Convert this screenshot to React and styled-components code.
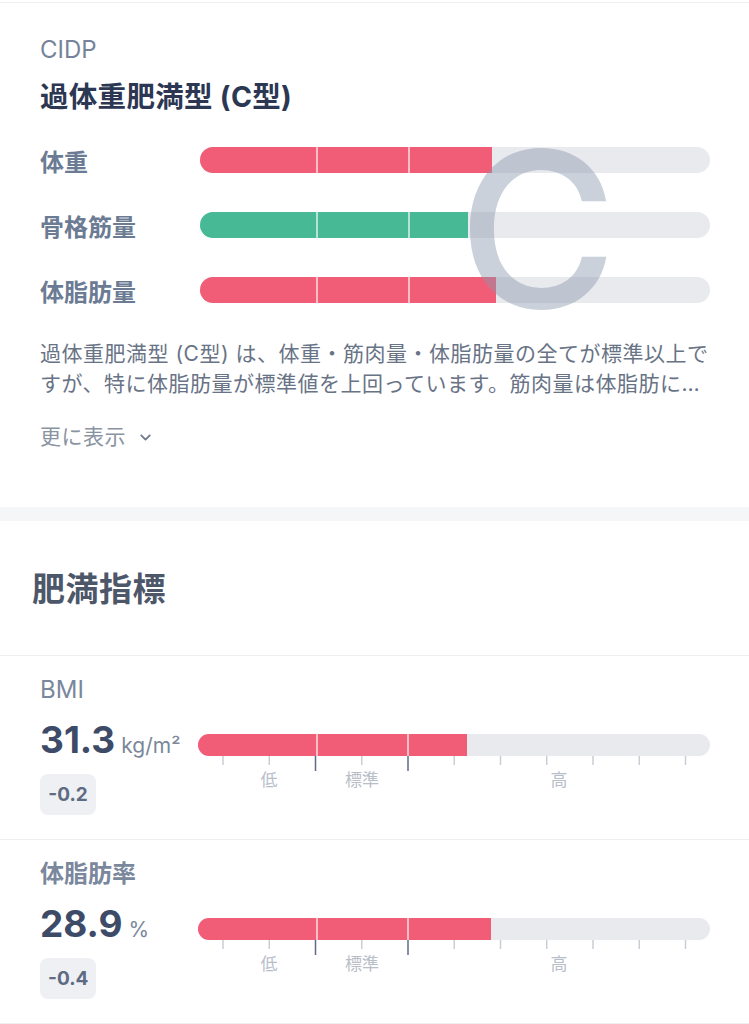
import React from "react";
import styled, { createGlobalStyle } from "styled-components";
import { ChevronDown } from "lucide-react";

const GlobalStyle = createGlobalStyle`
  html, body {
    margin: 0;
    padding: 0;
    background: #ffffff;
  }
  body {
    font-family: "Inter", "Noto Sans CJK JP", sans-serif;
    -webkit-font-smoothing: antialiased;
  }
`;

const RED = "#f15c77";
const GREEN = "#47b994";
const TRACK = "#e8eaee";

const Page = styled.div`
  width: 749px;
  padding-top: 2px;
  background: #ffffff;
`;

const TypeCard = styled.section`
  border-top: 1px solid #eef0f3;
  padding: 32px 40px 55px 40px;
  display: flex;
  flex-direction: column;
`;

const Eyebrow = styled.div`
  font-size: 24px;
  line-height: 30px;
  color: #76839a;
`;

const TypeTitle = styled.h2`
  margin: 13px 0 0 0;
  font-size: 28.5px;
  line-height: 38px;
  font-weight: 700;
  letter-spacing: 0.3px;
  color: #2c3853;
`;

const BarsArea = styled.div`
  position: relative;
  margin-top: 24px;
  display: flex;
  flex-direction: column;
  gap: 25px;
`;

const BarRow = styled.div`
  height: 40px;
  display: grid;
  grid-template-columns: 160px 510px;
  align-items: center;
`;

const RowLabel = styled.div`
  font-size: 24px;
  font-weight: 700;
  color: #6c7b94;
`;

const Track = styled.div`
  position: relative;
  height: ${(p) => p.$h}px;
  border-radius: ${(p) => p.$h / 2}px;
  background: ${TRACK};
  overflow: hidden;
`;

const Fill = styled.div`
  position: relative;
  height: 100%;
  background: ${(p) => p.$color};
  overflow: hidden;
`;

const Divider = styled.span`
  position: absolute;
  top: 0;
  bottom: 0;
  left: ${(p) => p.$at}px;
  width: 2px;
  background: rgba(255, 255, 255, 0.6);
`;

const TypeLetter = styled.div`
  position: absolute;
  left: 418px;
  top: -19px;
  font-family: "Inter", sans-serif;
  font-size: 217px;
  line-height: 1;
  font-weight: 500;
  color: rgba(140, 152, 174, 0.45);
  pointer-events: none;
`;

const Description = styled.p`
  margin: 29px 0 0 0;
  font-size: 21px;
  line-height: 30px;
  letter-spacing: 0.5px;
  color: #697386;
  display: -webkit-box;
  -webkit-line-clamp: 2;
  -webkit-box-orient: vertical;
  overflow: hidden;
`;

const MoreButton = styled.button`
  margin-top: 23px;
  align-self: flex-start;
  padding: 0;
  border: none;
  background: none;
  display: flex;
  align-items: center;
  gap: 11px;
  font-family: inherit;
  font-size: 21px;
  line-height: 30px;
  letter-spacing: 0.5px;
  color: #8a93a2;
  svg {
    color: #6f7a8c;
  }
`;

const SectionGap = styled.div`
  height: 14px;
  background: #f5f6f8;
`;

const SectionHeader = styled.div`
  padding: 46px 32px 44px 32px;
  border-bottom: 1px solid #eceef1;
`;

const SectionTitle = styled.h2`
  margin: 0;
  font-size: 33px;
  line-height: 44px;
  font-weight: 700;
  letter-spacing: 0.5px;
  color: #4d576a;
`;

const MetricRow = styled.div`
  padding: 19px 39px 24px 40px;
  border-bottom: 1px solid #eceef1;
`;

const MetricLabel = styled.div`
  font-size: 24px;
  line-height: 30px;
  font-weight: ${(p) => (p.$cjk ? 700 : 400)};
  color: #7a879c;
`;

const MetricBody = styled.div`
  margin-top: 13px;
  display: grid;
  grid-template-columns: 158px 512px;
  align-items: start;
`;

const ValueColumn = styled.div`
  display: flex;
  flex-direction: column;
  align-items: flex-start;
`;

const ValueLine = styled.div`
  display: flex;
  align-items: baseline;
  height: 44px;
`;

const Value = styled.span`
  font-size: 37px;
  line-height: 44px;
  font-weight: 700;
  color: #3d4b68;
`;

const Unit = styled.span`
  margin-left: 6px;
  font-size: 21px;
  color: #7b879b;
`;

const Badge = styled.span`
  margin-top: 12px;
  height: 41px;
  padding: 0 8px;
  min-width: 56px;
  box-sizing: border-box;
  border-radius: 8px;
  background: #eef0f4;
  display: flex;
  align-items: center;
  justify-content: center;
  font-size: 19px;
  font-weight: 700;
  color: #5e6b83;
`;

const Scale = styled.div`
  margin-top: 16px;
  position: relative;
  height: 62px;
`;

const Ticks = styled.svg`
  display: block;
`;

const ScaleLabel = styled.span`
  position: absolute;
  top: 35px;
  left: ${(p) => p.$at}px;
  transform: translateX(-50%);
  font-size: 17px;
  line-height: 22px;
  color: #b8bec8;
`;

const typeBars = [
  { label: "体重", color: RED, fill: 292 },
  { label: "骨格筋量", color: GREEN, fill: 268 },
  { label: "体脂肪量", color: RED, fill: 296 },
];

const metrics = [
  { label: "BMI", value: "31.3", unit: "kg/m²", diff: "-0.2", fill: 269 },
  { label: "体脂肪率", value: "28.9", unit: "%", diff: "-0.4", fill: 293, cjk: true },
];

const ticks = Array.from({ length: 11 }, (_, i) => 25 + i * 46.25);

const MetricScale = ({ fill }) => (
  <Scale>
    <Track $h={22}>
      <Fill $color={RED} style={{ width: fill }}>
        <Divider $at={118} />
        <Divider $at={209} />
      </Fill>
    </Track>
    <Ticks width="512" height="16" viewBox="0 0 512 16">
      {ticks.map((x, i) => {
        const major = i === 2 || i === 4;
        return (
          <line
            key={i}
            x1={x}
            x2={x}
            y1="0"
            y2={major ? 15 : 9}
            stroke={major ? "#5d6c84" : "#c9ced6"}
            strokeWidth="1.5"
          />
        );
      })}
    </Ticks>
    <ScaleLabel $at={71}>低</ScaleLabel>
    <ScaleLabel $at={164}>標準</ScaleLabel>
    <ScaleLabel $at={361}>高</ScaleLabel>
  </Scale>
);

export default function App() {
  return (
    <Page>
      <GlobalStyle />
      <TypeCard>
        <Eyebrow>CIDP</Eyebrow>
        <TypeTitle>過体重肥満型 (C型)</TypeTitle>
        <BarsArea>
          {typeBars.map((b) => (
            <BarRow key={b.label}>
              <RowLabel>{b.label}</RowLabel>
              <Track $h={26}>
                <Fill $color={b.color} style={{ width: b.fill }}>
                  <Divider $at={116} />
                  <Divider $at={208} />
                </Fill>
              </Track>
            </BarRow>
          ))}
          <TypeLetter>C</TypeLetter>
        </BarsArea>
        <Description>
          過体重肥満型 (C型) は、体重・筋肉量・体脂肪量の全てが標準以上ですが、特に体脂肪量が標準値を上回っています。筋肉量は体脂肪に比べて少ないため、食事の見直しと運動で体脂肪を減らしましょう。
        </Description>
        <MoreButton>
          更に表示
          <ChevronDown size={17} strokeWidth={2.6} />
        </MoreButton>
      </TypeCard>
      <SectionGap />
      <SectionHeader>
        <SectionTitle>肥満指標</SectionTitle>
      </SectionHeader>
      {metrics.map((m) => (
        <MetricRow key={m.label}>
          <MetricLabel $cjk={m.cjk}>{m.label}</MetricLabel>
          <MetricBody>
            <ValueColumn>
              <ValueLine>
                <Value>{m.value}</Value>
                <Unit>{m.unit}</Unit>
              </ValueLine>
              <Badge>{m.diff}</Badge>
            </ValueColumn>
            <MetricScale fill={m.fill} />
          </MetricBody>
        </MetricRow>
      ))}
    </Page>
  );
}
